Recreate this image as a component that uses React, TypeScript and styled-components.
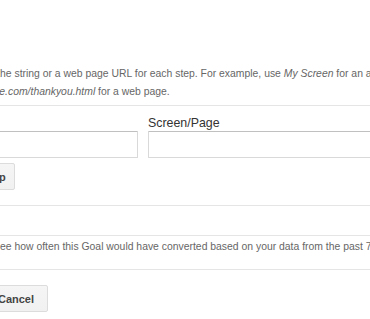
import React from 'react';
import styled, { createGlobalStyle } from 'styled-components';

const GlobalStyle = createGlobalStyle`
  html, body {
    margin: 0;
    padding: 0;
    background: #ffffff;
    overflow: hidden;
  }
  body {
    font-family: 'Liberation Sans', Arial, sans-serif;
    color: #333333;
  }
`;

const Page = styled.div`
  width: 370px;
  overflow: hidden;
`;

const Section = styled.div<{ $top: number; $bottom: number; $border?: boolean }>`
  padding-top: ${(p) => p.$top}px;
  padding-bottom: ${(p) => p.$bottom}px;
  border-bottom: ${(p) => (p.$border === false ? 'none' : '1px solid #e5e5e5')};
`;

const HelpLine = styled.div<{ $shift: number }>`
  font-size: 10.4px;
  line-height: 18px;
  color: #666666;
  white-space: nowrap;
  margin-left: ${(p) => p.$shift}px;

  em {
    font-style: italic;
  }
`;

const FieldRow = styled.div`
  display: flex;
  gap: 10px;
  margin-left: -62px;
  width: 600px;
`;

const Field = styled.div<{ $width: number }>`
  display: flex;
  flex-direction: column;
  width: ${(p) => p.$width}px;
  flex-shrink: 0;
`;

const Label = styled.label`
  font-size: 12.4px;
  line-height: 15px;
  color: #333333;
  white-space: nowrap;
`;

const TextInput = styled.input`
  box-sizing: border-box;
  height: 27px;
  width: 100%;
  margin: 0;
  padding: 0 6px;
  border: 1px solid #d9d9d9;
  border-top-color: #c0c0c0;
  border-radius: 1px;
  background: #ffffff;
  font-family: inherit;
  font-size: 12px;
`;

const Button = styled.button<{ $shift: number }>`
  box-sizing: border-box;
  height: 27px;
  min-width: 64px;
  margin: 0 0 0 ${(p) => p.$shift}px;
  padding: 0 8px;
  border: 1px solid #dcdcdc;
  border-radius: 2px;
  background: linear-gradient(#f5f5f5, #f1f1f1);
  color: #444444;
  font-family: inherit;
  font-size: 11px;
  font-weight: bold;
  text-align: center;
  white-space: nowrap;
  cursor: pointer;
`;

const ButtonRow = styled.div<{ $gap: number }>`
  display: flex;
  margin-top: ${(p) => p.$gap}px;
`;

export default function App() {
  return (
    <>
      <GlobalStyle />
      <Page>
        <Section $top={65} $bottom={4}>
          <HelpLine $shift={-2.9}>
            the string or a web page URL for each step. For example, use <em>My Screen</em> for an app or
          </HelpLine>
          <HelpLine $shift={-59}>
            <em>www.example.com/thankyou.html</em> for a web page.
          </HelpLine>
        </Section>

        <Section $top={10} $bottom={15}>
          <FieldRow>
            <Field $width={200}>
              <Label>Name</Label>
              <TextInput />
            </Field>
            <Field $width={300}>
              <Label>Screen/Page</Label>
              <TextInput />
            </Field>
          </FieldRow>
          <ButtonRow $gap={5}>
            <Button $shift={-104}>+ Add another Step</Button>
          </ButtonRow>
        </Section>

        <Section $top={29} $bottom={0} />

        <Section $top={2} $bottom={13}>
          <HelpLine $shift={-6.9}>
            See how often this Goal would have converted based on your data from the past 7 days.
          </HelpLine>
        </Section>

        <Section $top={0} $bottom={0} $border={false}>
          <ButtonRow $gap={15}>
            <Button $shift={-16}>Cancel</Button>
          </ButtonRow>
        </Section>
      </Page>
    </>
  );
}
